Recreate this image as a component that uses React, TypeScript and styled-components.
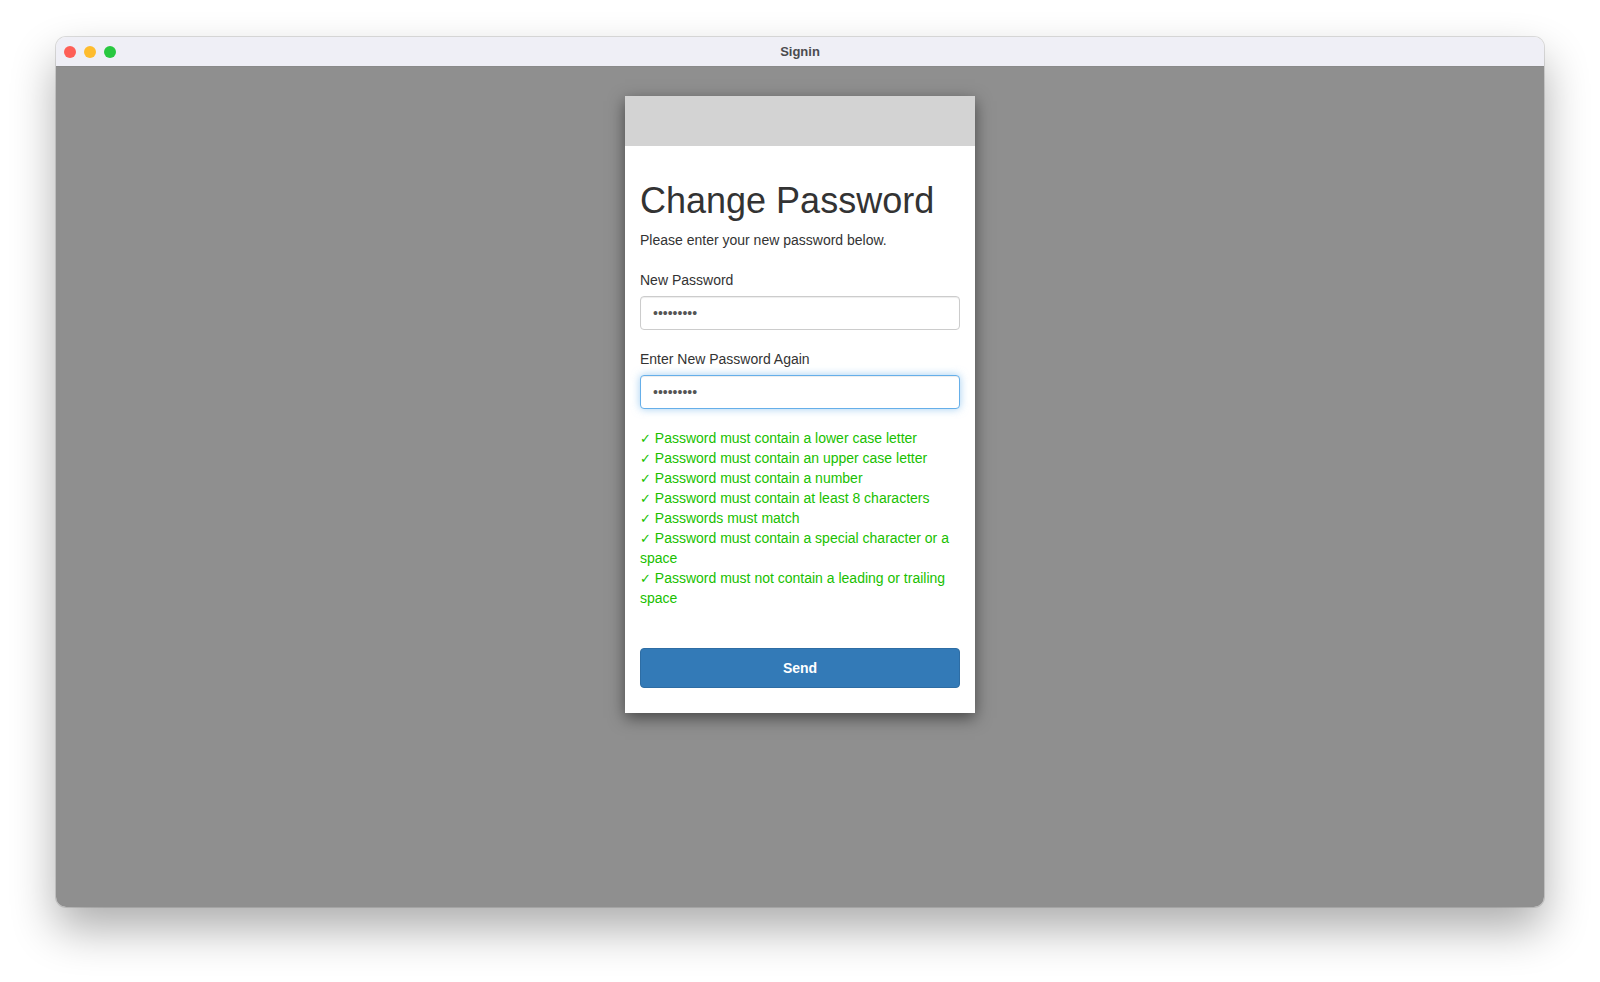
import styled, { createGlobalStyle } from 'styled-components';

const GlobalStyle = createGlobalStyle`
    html, body {
        margin: 0;
        padding: 0;
        background: #ffffff;
    }
    body {
        font-family: "Liberation Sans", Arial, Helvetica, sans-serif;
    }
`

const Desktop = styled.div`
    width: 1600px;
    height: 982px;
    box-sizing: border-box;
    padding: 37px 56px 75px 56px;
`

const Window = styled.div`
    height: 870px;
    border-radius: 10px;
    overflow: hidden;
    display: flex;
    flex-direction: column;
    box-shadow: 0 22px 45px rgba(0, 0, 0, 0.32), 0 0 0 1px rgba(0, 0, 0, 0.12);
`

const TitleBar = styled.div`
    position: relative;
    height: 29px;
    flex-shrink: 0;
    background: #efeff6;
    border-bottom: 1px solid #8a8a8a;
    display: flex;
    align-items: center;
    justify-content: center;
`

const Lights = styled.div`
    position: absolute;
    left: 8px;
    top: 9px;
    display: flex;
    gap: 8px;
`

const Light = styled.span<{ $color: string }>`
    width: 12px;
    height: 12px;
    border-radius: 50%;
    background: ${p => p.$color};
`

const WindowTitle = styled.span`
    font-size: 13px;
    font-weight: 700;
    color: #4b4b4f;
`

const Stage = styled.div`
    flex: 1;
    background: #8f8f8f;
    display: flex;
    justify-content: center;
    align-items: flex-start;
    padding-top: 29px;
`

const Card = styled.div`
    width: 350px;
    background: #ffffff;
    box-shadow: 0 5px 15px rgba(0, 0, 0, 0.5);
    color: #333333;
`

const Banner = styled.div`
    height: 50px;
    background: #d3d3d3;
`

const Body = styled.div`
    padding: 35px 15px 25px 15px;
`

const Heading = styled.h1`
    margin: 0 0 9px 0;
    font-size: 36px;
    font-weight: 400;
    line-height: 1.1;
`

const Lead = styled.p`
    margin: 0 0 20px 0;
    font-size: 14px;
    line-height: 20px;
`

const Label = styled.label`
    display: block;
    margin-bottom: 6px;
    font-size: 14px;
    line-height: 20px;
`

const Field = styled.input<{ $focused?: boolean }>`
    display: block;
    box-sizing: border-box;
    width: 100%;
    height: 34px;
    margin: 0 0 19px 0;
    padding: 6px 12px;
    font-family: "Liberation Sans", Arial, sans-serif;
    font-size: 14px;
    color: #555555;
    background: #ffffff;
    border: 1px solid ${p => (p.$focused ? '#66afe9' : '#cccccc')};
    border-radius: 4px;
    outline: none;
    box-shadow: inset 0 1px 1px rgba(0, 0, 0, 0.075)
        ${p => (p.$focused ? ', 0 0 8px rgba(102, 175, 233, 0.6)' : '')};
`

const Checks = styled.ul`
    list-style: none;
    margin: 0 0 40px 0;
    padding: 0;
`

const Check = styled.li`
    font-size: 14px;
    line-height: 20px;
    color: #19bf00;
`

const Tick = styled.span`
    font-family: "DejaVu Sans", sans-serif;
    font-size: 13px;
    font-weight: 700;
    line-height: 1;
`

const SendButton = styled.button`
    display: block;
    width: 100%;
    height: 40px;
    border: 1px solid #2e6da4;
    border-radius: 4px;
    background: #337ab7;
    color: #ffffff;
    font-family: "Liberation Sans", Arial, sans-serif;
    font-size: 14px;
    font-weight: 700;
    cursor: pointer;
`

const rules = [
    'Password must contain a lower case letter',
    'Password must contain an upper case letter',
    'Password must contain a number',
    'Password must contain at least 8 characters',
    'Passwords must match',
    'Password must contain a special character or a space',
    'Password must not contain a leading or trailing space',
];

export default function App() {
    return <>
        <GlobalStyle />
        <Desktop>
            <Window>
                <TitleBar>
                    <Lights>
                        <Light $color="#fe5f57" />
                        <Light $color="#febc2e" />
                        <Light $color="#28c840" />
                    </Lights>
                    <WindowTitle>Signin</WindowTitle>
                </TitleBar>
                <Stage>
                    <Card>
                        <Banner />
                        <Body>
                            <Heading>Change Password</Heading>
                            <Lead>Please enter your new password below.</Lead>
                            <Label htmlFor="pw1">New Password</Label>
                            <Field id="pw1" type="password" defaultValue="Abcdef12!" readOnly />
                            <Label htmlFor="pw2">Enter New Password Again</Label>
                            <Field id="pw2" type="password" defaultValue="Abcdef12!" readOnly $focused />
                            <Checks>
                                {rules.map(r => <Check key={r}><Tick>&#x2713;</Tick> {r}</Check>)}
                            </Checks>
                            <SendButton type="button">Send</SendButton>
                        </Body>
                    </Card>
                </Stage>
            </Window>
        </Desktop>
    </>
}
